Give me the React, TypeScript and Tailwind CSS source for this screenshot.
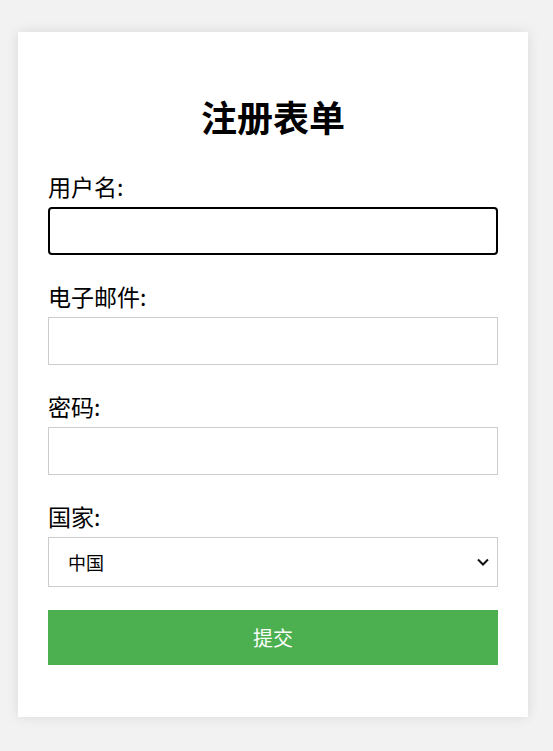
import React from 'react';

const font = { fontFamily: '"Noto Sans CJK SC", "Noto Sans", sans-serif' };

const Field: React.FC<{ label: string; focused?: boolean; type?: string }> = ({ label, focused, type = 'text' }) => (
    <div className="mb-[26px]">
        <label className="block h-[30px] text-[23px] leading-[30px] text-black mb-[6px]">{label}</label>
        <input
            type={type}
            className={`block w-full h-[48px] bg-white px-3 outline-none ${focused ? 'border-2 border-black rounded-[4px]' : 'border border-[#cccccc]'}`}
        />
    </div>
);

export default function App() {
    return (
        <div className="min-h-[751px] bg-[#f2f2f2] pt-[32px]" style={font}>
            <div className="ml-[18px] w-[510px] bg-white px-[30px] pt-[63px] pb-[52px] shadow-[0_0_12px_rgba(0,0,0,0.1)]">
                <h1 className="text-center text-[36px] font-bold leading-[42px] text-black mb-[34px]">注册表单</h1>
                <form>
                    <Field label="用户名:" focused />
                    <Field label="电子邮件:" type="email" />
                    <Field label="密码:" type="password" />
                    <div className="mb-[23px]">
                        <label className="block h-[30px] text-[23px] leading-[30px] text-black mb-[6px]">国家:</label>
                        <div className="relative h-[50px] border border-[#cccccc] bg-white flex items-center pl-[19px]">
                            <span className="text-[18px] text-black">中国</span>
                            <svg className="absolute right-[8px] top-1/2 -translate-y-1/2" width="12" height="8" viewBox="0 0 12 8" fill="none">
                                <path d="M1 1.5 L6 6.5 L11 1.5" stroke="#111" strokeWidth="2" />
                            </svg>
                        </div>
                    </div>
                    <button type="button" className="block w-full h-[55px] bg-[#4caf50] text-white text-[20px]">提交</button>
                </form>
            </div>
        </div>
    );
}
